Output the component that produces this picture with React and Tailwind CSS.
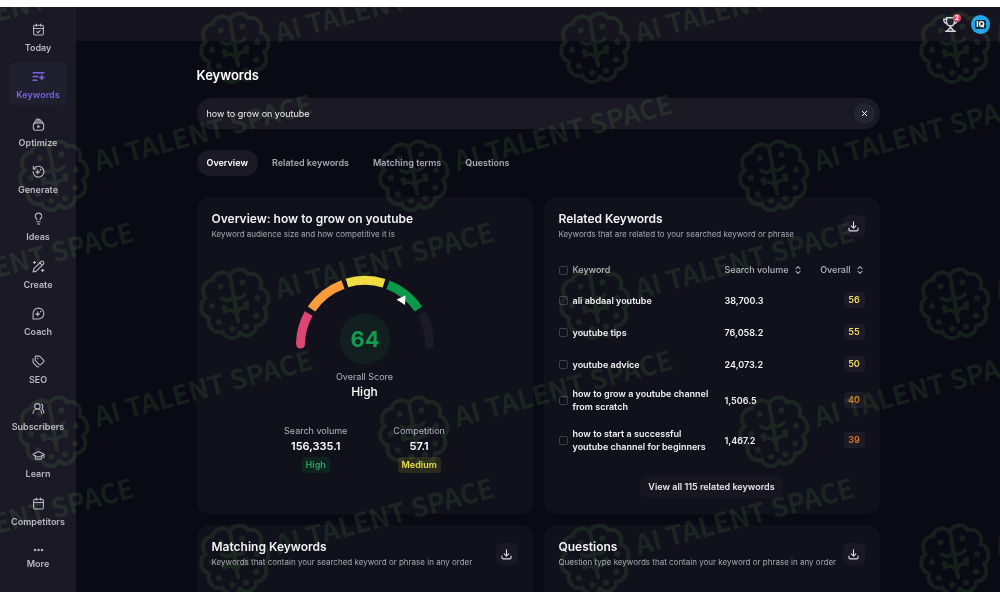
import { useState } from 'react'
import { CalendarCheck, Lightbulb, Tags, UsersRound, GraduationCap, Calendar, Ellipsis, X, ChevronsUpDown } from 'lucide-react'

// --- ICONS ---
const Glyph = ({ children, className }) => (
  <svg
    viewBox="0 0 24 24"
    fill="none"
    stroke="currentColor"
    strokeWidth="2"
    strokeLinecap="round"
    strokeLinejoin="round"
    className={className}
    aria-hidden="true"
  >
    {children}
  </svg>
);

const KeywordsIcon = (props) => (
  <Glyph {...props}>
    <path d="M2 5h20M2 12h9M2 19h7" strokeWidth="2.5" />
    <path d="M18 9l1.6 3.4L23 14l-3.4 1.6L18 19l-1.6-3.4L13 14l3.4-1.6z" fill="currentColor" strokeWidth="1" />
  </Glyph>
);

const OptimizeIcon = (props) => (
  <Glyph {...props}>
    <rect x="2.5" y="9" width="19" height="13.5" rx="4" />
    <path d="M5 9V7.500a2 2 0 0 1 2-2h10a2 2 0 0 1 2 2V9M7.500 5C7 1.500 11 .5 12 3.500c1.500-1.500 3.500-.5 3.500 1.500" />
    <path d="M10.500 13.500v5l4-2.500z" fill="currentColor" strokeWidth="1" />
  </Glyph>
);

const Sparkles = () => (
  <>
    <path d="M10.500 9l1.200 2.800 2.800 1.200-2.800 1.200-1.200 2.800-1.200-2.800L6.500 13l2.800-1.200z" fill="currentColor" strokeWidth="1" />
    <circle cx="16" cy="8.500" r="1.500" fill="currentColor" stroke="none" />
  </>
);

const GenerateIcon = (props) => (
  <Glyph {...props}>
    <path d="M3.500 7A10 10 0 1 1 2 12" />
    <path d="M2.500 2.500V7.500H7.500" />
    <Sparkles />
  </Glyph>
);

const CreateIcon = (props) => (
  <Glyph {...props}>
    <path d="M2 22l1.500-6L16.500 3a3 3 0 0 1 4.500 4.500L8 20.500z" />
    <path d="M14.500 5l4.500 4.500" />
    <path d="M4.500 2.500v4M2.500 4.500h4M19.500 17v4.500M17.500 19.200h4.500" />
  </Glyph>
);

const CoachIcon = (props) => (
  <Glyph {...props}>
    <path d="M2 22V12a10 10 0 1 1 10 10z" />
    <Sparkles />
  </Glyph>
);

const TrayDownIcon = (props) => (
  <Glyph {...props}>
    <path d="M12 2v13M7 10.500l5 5 5-5M2 15.500v3a3 3 0 0 0 3 3h14a3 3 0 0 0 3-3v-3" strokeWidth="2.4" />
  </Glyph>
);

const TrophyIcon = (props) => (
  <Glyph {...props}>
    <path d="M6.500 2.500h11v6c0 3.500-2.500 5.500-5.500 5.500s-5.500-2-5.500-5.500z" />
    <path d="M6.500 4.500H2.500c0 3.500 1.500 5.500 4.500 6M17.500 4.500h4c0 3.500-1.500 5.500-4.500 6" />
    <path d="M12 14v3M12 16l-5 5.500M12 16l5 5.500M5 21.500h14" />
  </Glyph>
);

const navItems = [
  { label: 'Today', icon: CalendarCheck },
  { label: 'Keywords', icon: KeywordsIcon, active: true },
  { label: 'Optimize', icon: OptimizeIcon },
  { label: 'Generate', icon: GenerateIcon },
  { label: 'Ideas', icon: Lightbulb },
  { label: 'Create', icon: CreateIcon },
  { label: 'Coach', icon: CoachIcon },
  { label: 'SEO', icon: Tags },
  { label: 'Subscribers', icon: UsersRound },
  { label: 'Learn', icon: GraduationCap },
  { label: 'Competitors', icon: Calendar },
];

const tabs = ['Overview', 'Related keywords', 'Matching terms', 'Questions'];

const relatedKeywords = [
  { keyword: 'ali abdaal youtube', volume: '38,700.3', overall: 56 },
  { keyword: 'youtube tips', volume: '76,058.2', overall: 55 },
  { keyword: 'youtube advice', volume: '24,073.2', overall: 50 },
  { keyword: 'how to grow a youtube channel from scratch', volume: '1,506.5', overall: 40 },
  { keyword: 'how to start a successful youtube channel for beginners', volume: '1,467.2', overall: 39 },
];

// Utils
function cn(...inputs) {
  return inputs.filter(Boolean).join(' ');
}

const Sidebar = () => (
  <nav className="flex w-[76px] shrink-0 flex-col items-center justify-between bg-[#1a1925] pt-2 pb-5">
    {navItems.map(({ label, icon: Icon, active }) => (
      <a
        key={label}
        href="#"
        className={cn(
          'flex h-[43px] w-[58px] flex-col items-center gap-1 rounded-md pt-2 text-[9px] leading-4 font-semibold',
          active ? 'bg-[#201f2d] text-[#7a62e0]' : 'text-[#b9b8c4]'
        )}
      >
        <Icon className="size-[13px]" />
        {label}
      </a>
    ))}
    <a href="#" className="flex h-[36px] w-[58px] flex-col items-center pt-2 text-[9px] leading-4 font-semibold text-[#b9b8c4]">
      <Ellipsis className="size-[13px]" strokeWidth={3} />
      More
    </a>
  </nav>
);

const Header = () => (
  <header className="flex h-[34px] shrink-0 items-center justify-end gap-3 bg-[#15141f] px-[10px]">
    <button type="button" aria-label="Achievements" className="relative text-[#d5d4dc]">
      <TrophyIcon className="size-[17px]" />
      <span className="absolute -top-[2px] -right-[2px] flex size-2 items-center justify-center rounded-full bg-[#d9496c] text-[6px] leading-none font-bold text-white">2</span>
    </button>
    <button type="button" aria-label="Account" className="flex size-[19px] items-center justify-center rounded-full bg-[#22a5e6]">
      <span className="rounded-[2px] bg-[#0b2536] px-px text-[8px] leading-[9px] font-extrabold text-white">IQ</span>
    </button>
  </header>
);

const Card = ({ title, subtitle, download, className, children }) => (
  <section className={cn('flex flex-col rounded-xl bg-[#11111b] px-[15px] pt-[14px]', className)}>
    <div className="flex items-center justify-between">
      <div>
        <h2 className="text-[12px] leading-4 font-semibold text-[#f1f0f4]">{title}</h2>
        <p className="text-[8px] leading-[14px] text-[#a9a8b4]">{subtitle}</p>
      </div>
      {download && (
        <button type="button" aria-label={`Download ${title}`} className="flex size-[22px] items-center justify-center rounded-md bg-[#191824] text-[#dddce4]">
          <TrayDownIcon className="size-[11px]" />
        </button>
      )}
    </div>
    {children}
  </section>
);

const Gauge = ({ score }) => (
  <svg viewBox="0 0 140 92" className="h-[92px] w-[140px]" fill="none" strokeWidth="9" role="img" aria-label={`Overall score ${score}`}>
    <path d="M5.500 69A64.500 64.500 0 0 1 13.700 38.500" stroke="#dc4672" />
    <circle cx="5.600" cy="69" r="4.500" fill="#dc4672" stroke="none" />
    <path d="M16.500 34A64.500 64.500 0 0 1 48 9.400" stroke="#fb9c3c" />
    <path d="M52 8A64.500 64.500 0 0 1 89 8.200" stroke="#f1dc42" />
    <path d="M93 9.700A64.500 64.500 0 0 1 123.500 34" stroke="#0b9a4c" />
    <path d="M126.500 38.500A64.500 64.500 0 0 1 134.500 69" stroke="#1b1a25" />
    <circle cx="134.400" cy="69" r="4.500" fill="#1b1a25" stroke="none" />
    <path d="M101.500 24.500l9-4-.5 9.500z" fill="#fff" />
    <circle cx="70" cy="64" r="25.500" fill="#11201f" />
    <text x="70" y="72" textAnchor="middle" fill="#159a51" className="text-[22px] font-bold">{score}</text>
  </svg>
);

const Stat = ({ label, value, badge, tone }) => (
  <div className="flex flex-col items-center">
    <span className="text-[9px] leading-[14px] text-[#b5b4c0]">{label}</span>
    <span className="text-[11px] leading-4 font-semibold text-white">{value}</span>
    <span className={cn('mt-[3px] rounded px-1 text-[9px] leading-4 font-semibold', tone)}>{badge}</span>
  </div>
);

const Checkbox = ({ label }) => (
  <input type="checkbox" aria-label={label} className="block size-[9px] appearance-none rounded-[2px] border border-[#3d3c49] checked:bg-[#7a62e0]" />
);

const RelatedTable = () => (
  <table className="mt-[15px] w-full table-fixed text-left">
    <colgroup>
      <col className="w-[14px]" />
      <col className="w-[152px]" />
      <col />
      <col className="w-[60px]" />
    </colgroup>
    <thead>
      <tr className="h-7 text-[9px] text-[#b5b4c0]">
        <th><Checkbox label="Select all" /></th>
        <th className="font-medium">Keyword</th>
        <th className="font-medium">
          <button type="button" className="flex items-center gap-1 whitespace-nowrap">
            Search volume <ChevronsUpDown className="size-[10px]" strokeWidth={2.5} />
          </button>
        </th>
        <th className="font-medium">
          <button type="button" className="ml-auto flex items-center gap-1 whitespace-nowrap">
            Overall <ChevronsUpDown className="size-[10px]" strokeWidth={2.5} />
          </button>
        </th>
      </tr>
    </thead>
    <tbody>
      {relatedKeywords.map((row) => (
        <tr key={row.keyword} className="h-8 text-[9px] leading-[13px] font-semibold text-[#f1f0f4]">
          <td><Checkbox label={row.keyword} /></td>
          <td className="py-[7px] pr-3">{row.keyword}</td>
          <td>{row.volume}</td>
          <td>
            <span className={cn('ml-auto block w-[21px] rounded bg-[#1c1b27] text-center leading-4', row.overall >= 50 ? 'text-[#f1dc62]' : 'text-[#d97a28]')}>
              {row.overall}
            </span>
          </td>
        </tr>
      ))}
    </tbody>
  </table>
);

// Tiled brand mark laid over the whole window
const Watermark = () => (
  <svg className="pointer-events-none absolute inset-0 size-full mix-blend-screen" aria-hidden="true">
    <defs>
      <g id="half-brain">
        <path d="M0-29C-5-35-15-35-18-27C-27-28-32-19-28-11C-36-7-36 5-28 9C-32 18-25 26-17 25C-15 34-4 36 0 29" />
        <path d="M0 12C-1 6-6 4-12 6M0-8C-3-4-8-4-12-8" strokeWidth="3.500" />
        <path d="M-11-20h.1M-23-2h.1M-11 2h.1M-19 15h.1M-7 24h.1" strokeWidth="6" />
      </g>
      <g id="mark">
        <g transform="rotate(-10)" fill="none" stroke="#0c1706" strokeWidth="4" strokeLinecap="round">
          <use href="#half-brain" />
          <use href="#half-brain" transform="scale(-1 1)" />
          <path d="M0-29V18" />
        </g>
        <text
          transform="translate(152 -34) rotate(-15)"
          textAnchor="middle"
          fill="#0c1706"
          className="font-['Noto_Sans_CJK_JP',sans-serif] text-[27px] font-bold"
        >
          AI TALENT SPACE
        </text>
      </g>
    </defs>
    {[0, 1, 2, 3, 4].map((row) =>
      [-1, 0, 1, 2].map((col) => (
        <use key={`${row}-${col}`} href="#mark" x={(row % 2 ? 54 : 235) + col * 360} y={41 + row * 128} />
      ))
    )}
  </svg>
);

function App() {
  const [query, setQuery] = useState('how to grow on youtube');
  const [activeTab, setActiveTab] = useState('Overview');

  return (
    <div className="h-screen bg-white pt-[7px] pb-2 font-['Inter',sans-serif]">
      <div className="relative flex h-full overflow-hidden bg-[#0a0a15]">
        <Sidebar />
        <div className="flex min-w-0 flex-1 flex-col">
          <Header />
          <main className="mx-auto w-full max-w-[683px] flex-1 overflow-hidden pt-6">
            <h1 className="text-[13px] leading-5 font-semibold text-white">Keywords</h1>

            <div className="mt-[13px] flex h-[31px] items-center rounded-full bg-[#1a1924] pr-[5px] pl-[10px]">
              <input
                type="text"
                aria-label="Search keywords"
                value={query}
                onChange={(e) => setQuery(e.target.value)}
                className="min-w-0 flex-1 bg-transparent text-[9px] text-[#f1f0f4] outline-none"
              />
              <button type="button" aria-label="Clear" onClick={() => setQuery('')} className="flex size-[21px] items-center justify-center rounded-full bg-[#252431] text-white">
                <X className="size-[9px]" strokeWidth={2.5} />
              </button>
            </div>

            <div role="tablist" className="mt-[21px] flex gap-1">
              {tabs.map((tab) => (
                <button
                  key={tab}
                  type="button"
                  role="tab"
                  aria-selected={tab === activeTab}
                  onClick={() => setActiveTab(tab)}
                  className={cn(
                    'h-[26px] rounded-full px-[10px] text-[9px] font-semibold',
                    tab === activeTab ? 'bg-[#1a1924] text-white' : 'text-[#a9a8b4]'
                  )}
                >
                  {tab}
                </button>
              ))}
            </div>

            <div className="mt-[21px] grid grid-cols-2 gap-[11px]">
              <Card title="Overview: how to grow on youtube" subtitle="Keyword audience size and how competitive it is">
                <div className="mt-[34px] flex flex-col items-center">
                  <Gauge score={64} />
                  <span className="mt-[3px] text-[9px] leading-[14px] text-[#b5b4c0]">Overall Score</span>
                  <span className="text-[12px] leading-4 font-medium text-white">High</span>
                  <div className="mt-6 flex gap-[46px]">
                    <Stat label="Search volume" value="156,335.1" badge="High" tone="bg-[#10241f] text-[#2f9e5f]" />
                    <Stat label="Competition" value="57.1" badge="Medium" tone="bg-[#2a2a1d] text-[#e6d850]" />
                  </div>
                </div>
              </Card>

              <Card title="Related Keywords" subtitle="Keywords that are related to your searched keyword or phrase" download className="pb-4">
                <RelatedTable />
                <button type="button" className="mx-auto mt-4 h-[22px] rounded-lg bg-[#171620] px-2 text-[9px] font-semibold text-[#e6e5ec]">
                  View all 115 related keywords
                </button>
              </Card>

              <Card title="Matching Keywords" subtitle="Keywords that contain your searched keyword or phrase in any order" download className="min-h-[120px]" />
              <Card title="Questions" subtitle="Question type keywords that contain your keyword or phrase in any order" download className="min-h-[120px]" />
            </div>
          </main>
        </div>
        <Watermark />
      </div>
    </div>
  )
}

export default App
